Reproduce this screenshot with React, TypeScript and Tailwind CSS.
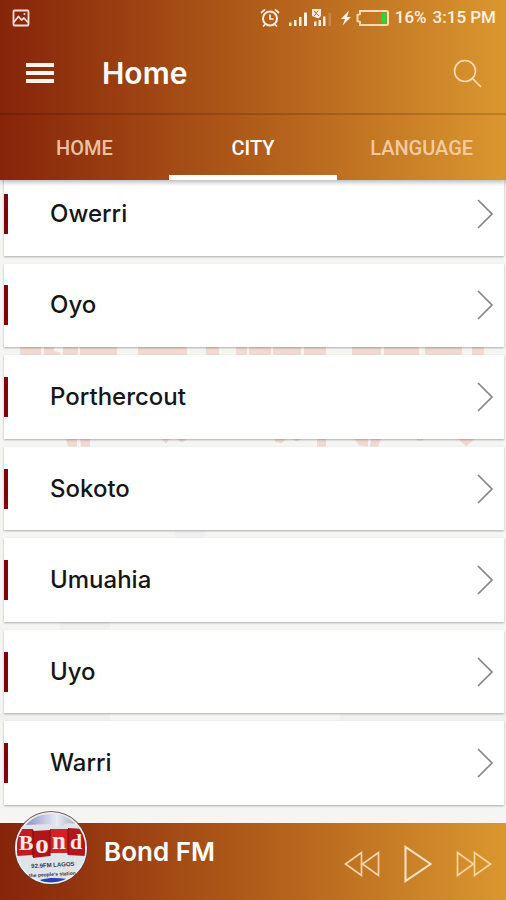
import React from "react";

const cities = ["Owerri", "Oyo", "Porthercout", "Sokoto", "Umuahia", "Uyo", "Warri"];

const tabs = [
  { name: "HOME", active: false },
  { name: "CITY", active: true },
  { name: "LANGUAGE", active: false },
];

function PictureIcon() {
  return (
    <svg width="18" height="18" viewBox="0 0 18 18" fill="none" stroke="#ffe0d8" strokeWidth="1.8" aria-hidden="true">
      <rect x="1.5" y="1.5" width="15" height="15" rx="1" />
      <path d="M2 13l4.500-5.500 3 3.500 2.500-2 4 4.500" strokeLinejoin="round" />
      <circle cx="12.500" cy="5" r="1" fill="#ffe0d8" stroke="none" />
    </svg>
  );
}

function AlarmIcon() {
  return (
    <svg width="20" height="20" viewBox="0 0 20 20" fill="none" stroke="#ffeedd" strokeWidth="2" strokeLinecap="round" aria-hidden="true">
      <circle cx="10" cy="10.5" r="7" />
      <path d="M10 7v4h3M1.500 4.500l3-2.700M18.500 4.500l-3-2.700M5 16.500l-1.500 1.500M15 16.500l1.500 1.500" strokeWidth="1.700" />
    </svg>
  );
}

function SignalIcons() {
  return (
    <svg width="44" height="20" viewBox="0 0 44 20" fill="#ffeedd" aria-hidden="true">
      <path d="M1 14.500h2.500V18H1zM6 12h2.500v6H6zM11 9h2.500v9H11zM16 4.500h3V18h-3z" />
      <path d="M24 1h9v7l-2.500 2.500L24 8z" />
      <path d="M26 2.500l2 3 2-3M26 8l2.500-2.500L31 8" stroke="#b3682b" strokeWidth="1" fill="none" />
      <path d="M26 13.500h2.500V18H26zM30.500 12H33v6h-2.500zM35 8.500h2.500V18H35z" />
      <path d="M40.500 5H43v13h-2.500z" opacity="0.2" />
    </svg>
  );
}

function BatteryIcons() {
  return (
    <svg width="49" height="18" viewBox="0 0 49 18" aria-hidden="true">
      <path d="M9 1.500L1 10h4l-2.500 6.500L11 8H7z" fill="#fff3e6" />
      <path d="M20 2h26.500a1.500 1.500 0 0 1 1.500 1.500v11a1.500 1.500 0 0 1-1.500 1.500H20v-3l-2.500-1V6l2.500-1z" fill="none" stroke="#ffdcae" strokeWidth="2" />
      <rect x="41.500" y="3.500" width="5" height="11" fill="#22d83a" />
    </svg>
  );
}

function Chevron() {
  return (
    <svg width="18" height="30" viewBox="0 0 18 30" fill="none" stroke="#858585" strokeWidth="1.700" aria-hidden="true">
      <path d="M2 1l14 14L2 29" />
    </svg>
  );
}

function Watermark() {
  return (
    <svg
      className="absolute inset-0 h-full w-full"
      viewBox="0 0 506 644"
      preserveAspectRatio="none"
      fill="#efd9d1"
      aria-hidden="true"
    >
      <path d="M20 166h21v10H20zM44 166h10v5l6 2v3H44zM63 166h15v10H63zM80 166h37v10H80zM138 166h49v10h-49zM206 166h13v10h-13zM236 166h11v10h-11zM249 166h22v10h-22zM273 166h28v10h-28zM304 166h22v10h-22zM352 166h29v10h-29zM384 166h35v10h-35zM425 166h37v10h-37zM472 166h12v10h-12z" />
      <path d="M66 259h11v8h-9zM80 259h10v8h-9zM161 259h9l-4 5zM176 259h12l-6 4zM275 259h12l-6 5-6-2zM291 259h11l-5 3zM317 259h9v8h-9zM354 259h14v8l-9-1zM371 259h10l-3 8h-8zM417 259h6v2h-6zM458 259h17l-9 8z" />
      <path d="M0 534h110v8H0zM340 534h166v8H340zM60 442h50v8H60zM175 351h30v8h-30z" fill="#f0f0ef" />
    </svg>
  );
}

function StationLogo() {
  return (
    <svg width="74" height="76" viewBox="0 0 74 76" role="img" aria-label="Bond FM logo">
      <defs>
        <clipPath id="disc">
          <circle cx="37" cy="38" r="35.500" />
        </clipPath>
        <linearGradient id="sky" x1="0" x2="1">
          <stop offset="0" stopColor="#8d90c4" />
          <stop offset="0.600" stopColor="#e9ecf5" />
          <stop offset="1" stopColor="#a4aabb" />
        </linearGradient>
      </defs>
      <circle cx="37" cy="38" r="37" fill="#5b3431" opacity="0.800" />
      <g clipPath="url(#disc)">
        <rect width="74" height="76" fill="#dfe4e8" />
        <path d="M12 15C22 1 50 0 63 14L54 13 46 17 34 14z" fill="url(#sky)" />
        <path d="M26 70c10-3 18-2 27-1l-8 6H32z" fill="#2544b4" />
        <path d="M3 19h16v26L3 46z" fill="#c51b1d" />
        <path d="M19 21l17-1v26l-17 2z" fill="#b1151a" />
        <path d="M36 19h18v24H36z" fill="#d22224" />
        <path d="M54 18l17 1v27l-17-1z" fill="#b4161b" />
        <path d="M19 20v27M36 20v26M54 19v26" stroke="#6a1015" />
      </g>
      <circle cx="37" cy="38" r="35.200" fill="none" stroke="#eceff2" strokeWidth="1.600" />
      <g fill="#fbe9e5" fontFamily="'Liberation Serif', serif" fontWeight="700" textAnchor="middle">
        <text x="12" y="40" fontSize="22">B</text>
        <text x="28" y="43" fontSize="27">o</text>
        <text x="45" y="39" fontSize="25">n</text>
        <text x="62" y="39" fontSize="22">d</text>
      </g>
      <g fill="#35383f" fontFamily="'Liberation Sans', sans-serif" fontWeight="700" textAnchor="middle" transform="rotate(-3 38 58)">
        <text x="39" y="57" fontSize="6">92.9FM LAGOS</text>
        <text x="38" y="66" fontSize="5">the people's station</text>
      </g>
    </svg>
  );
}

function RewindIcon() {
  return (
    <svg width="36" height="26" viewBox="0 0 36 26" fill="none" stroke="#ffd9b0" strokeWidth="1.600" aria-hidden="true">
      <path d="M17.500 1.500v23L1.500 13zM34.500 1.500v23L18.500 13z" />
    </svg>
  );
}

function PlayIcon() {
  return (
    <svg width="28" height="38" viewBox="0 0 28 38" fill="none" stroke="#ffe6c8" strokeWidth="2" aria-hidden="true">
      <path d="M1.500 2v34L26.500 19z" />
    </svg>
  );
}

function ForwardIcon() {
  return (
    <svg width="36" height="26" viewBox="0 0 36 26" fill="none" stroke="#ffd9a0" strokeWidth="1.600" aria-hidden="true">
      <path d="M1.500 1.500v23l16-11.500zM18.500 1.500v23l16-11.500z" />
    </svg>
  );
}

export default function App() {
  return (
    <div className="flex min-h-screen flex-col bg-[#f5f5f3] font-['Inter',sans-serif]">
      <header className="sticky top-0 z-20 shadow-[0_2px_5px_rgba(0,0,0,0.3)]">
        <div className="border-b-2 border-black/15 bg-[linear-gradient(90deg,#86240a,#b05c1a_50%,#da972f)] bg-origin-border">
          <div className="flex h-9 items-center justify-between pr-2.5 pl-3">
            <PictureIcon />
            <div className="flex items-center font-['Roboto',sans-serif] text-[17px] font-medium text-[#fff0e0]">
              <AlarmIcon />
              <span className="ml-2 flex"><SignalIcons /></span>
              <span className="mr-1.5 ml-2 flex"><BatteryIcons /></span>
              <span className="mr-1.5">16%</span>
              <span>3:15 PM</span>
            </div>
          </div>
          <div className="flex h-[77px] items-center pr-6 pb-1 pl-6.5">
            <button type="button" aria-label="Open menu" className="flex w-7 flex-col gap-1">
              <span className="h-1 bg-[#fff3ee]" />
              <span className="h-1 bg-[#fff3ee]" />
              <span className="h-1 bg-[#fff3ee]" />
            </button>
            <h1 className="ml-12 flex-1 text-[30px] leading-8 font-semibold text-white">Home</h1>
            <button type="button" aria-label="Search">
              <svg width="30" height="30" viewBox="0 0 30 30" fill="none" stroke="#ffdfb8" strokeWidth="1.600" aria-hidden="true">
                <circle cx="13" cy="13" r="10.500" />
                <path d="M20.500 20.500L29 29" />
              </svg>
            </button>
          </div>
        </div>
        <nav className="grid h-[65px] grid-cols-3 bg-[linear-gradient(90deg,#86240a,#b05c1a_50%,#da972f)] font-['Roboto',sans-serif] text-xl font-medium">
          {tabs.map((tab) => (
            <a
              key={tab.name}
              href="#"
              aria-current={tab.active ? "page" : undefined}
              className={
                tab.active
                  ? "flex items-center justify-center border-b-[5px] border-white pt-1.5 text-white"
                  : "flex items-center justify-center border-b-[5px] border-transparent pt-1.5 text-[#f9d4b8]/90"
              }
            >
              {tab.name}
            </a>
          ))}
        </nav>
      </header>

      <main className="relative flex flex-1 flex-col">
        <Watermark />
        <ul className="relative -mt-2 flex flex-1 flex-col gap-2 pr-0.5 pb-4.5 pl-1">
          {cities.map((city) => (
            <li key={city} className="flex min-h-16 flex-1 bg-white shadow-[0_1px_2px_rgba(0,0,0,0.3)]">
              <a href="#" className="flex flex-1 items-center pr-2.5">
                <span className="h-10 w-1 bg-[#7d0508]" />
                <span className="ml-[42px] flex-1 text-2xl leading-7 font-medium text-[#161616]">{city}</span>
                <Chevron />
              </a>
            </li>
          ))}
        </ul>
      </main>

      <footer className="sticky bottom-0 z-10 flex h-[77px] items-center bg-[linear-gradient(90deg,#86240a,#b05c1a_50%,#da972f)] pr-3.5 pl-3.5">
        <span className="-mt-7 flex"><StationLogo /></span>
        <span className="mb-5 ml-4 flex-1 text-[26px] leading-8 font-semibold text-white">Bond FM</span>
        <div className="mt-1 flex items-center gap-6">
          <button type="button" aria-label="Previous station"><RewindIcon /></button>
          <button type="button" aria-label="Play"><PlayIcon /></button>
          <button type="button" aria-label="Next station"><ForwardIcon /></button>
        </div>
      </footer>
    </div>
  );
}
